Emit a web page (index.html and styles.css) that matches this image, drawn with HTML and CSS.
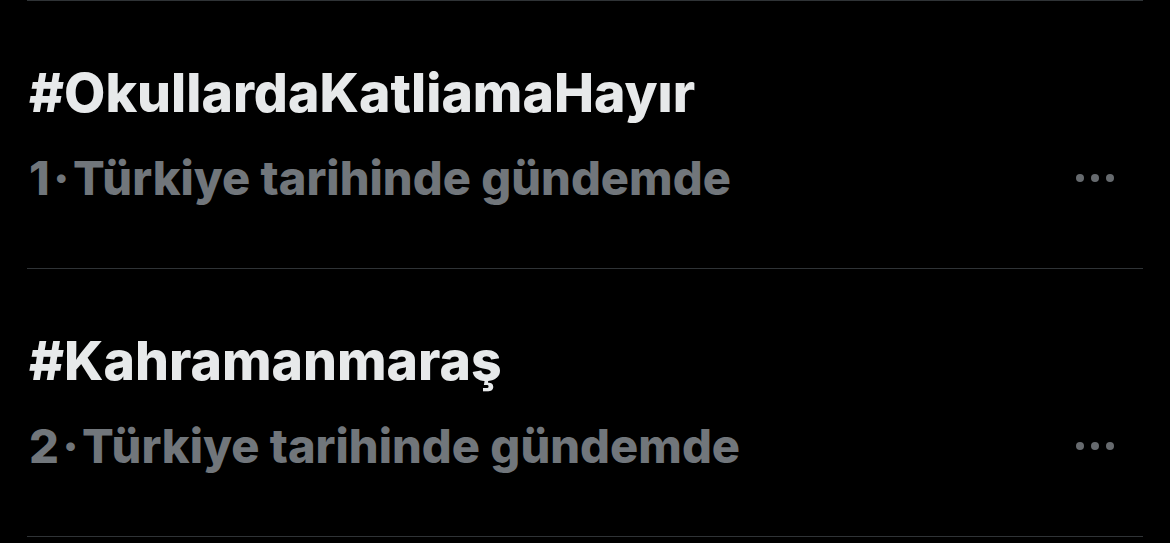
FILE: index.html
```html
<!DOCTYPE html>
<html lang="tr">
<head>
<meta charset="utf-8">
<link rel="stylesheet" href="styles.css">
</head>
<body>
<div class="list">
  <div class="trend">
    <div class="title">#OkullardaKatliamaHayır</div>
    <div class="meta">
      <span class="sub"><span class="rank">1 · </span>Türkiye tarihinde gündemde</span>
      <span class="more"><i></i><i></i><i></i></span>
    </div>
  </div>
  <div class="trend">
    <div class="title">#Kahramanmaraş</div>
    <div class="meta">
      <span class="sub"><span class="rank">2 · </span>Türkiye tarihinde gündemde</span>
      <span class="more"><i></i><i></i><i></i></span>
    </div>
  </div>
</div>
</body>
</html>
```
FILE: styles.css
```css
html, body {
  margin: 0;
  background: #000;
}
.list {
  margin-left: 27px;
  width: 1116px;
  border-top: 1px solid #2f3336;
  font-family: Inter, "Noto Sans", sans-serif;
  font-weight: 800;
}
.trend {
  box-sizing: border-box;
  height: 268px;
  border-bottom: 1px solid #2f3336;
  padding-left: 2px;
  padding-top: 60px;
}
.title {
  color: #e7e9ea;
  font-size: 53.5px;
  line-height: 64px;
}
.meta {
  display: flex;
  align-items: center;
  justify-content: space-between;
  margin-top: 26px;
  padding-right: 29px;
}
.sub {
  color: #71767b;
  font-size: 47px;
  line-height: 54px;
}
.rank {
  word-spacing: -7px;
}
.more {
  display: flex;
  gap: 7px;
}
.more i {
  display: block;
  width: 8px;
  height: 8px;
  border-radius: 50%;
  background: #666a6e;
}
```
